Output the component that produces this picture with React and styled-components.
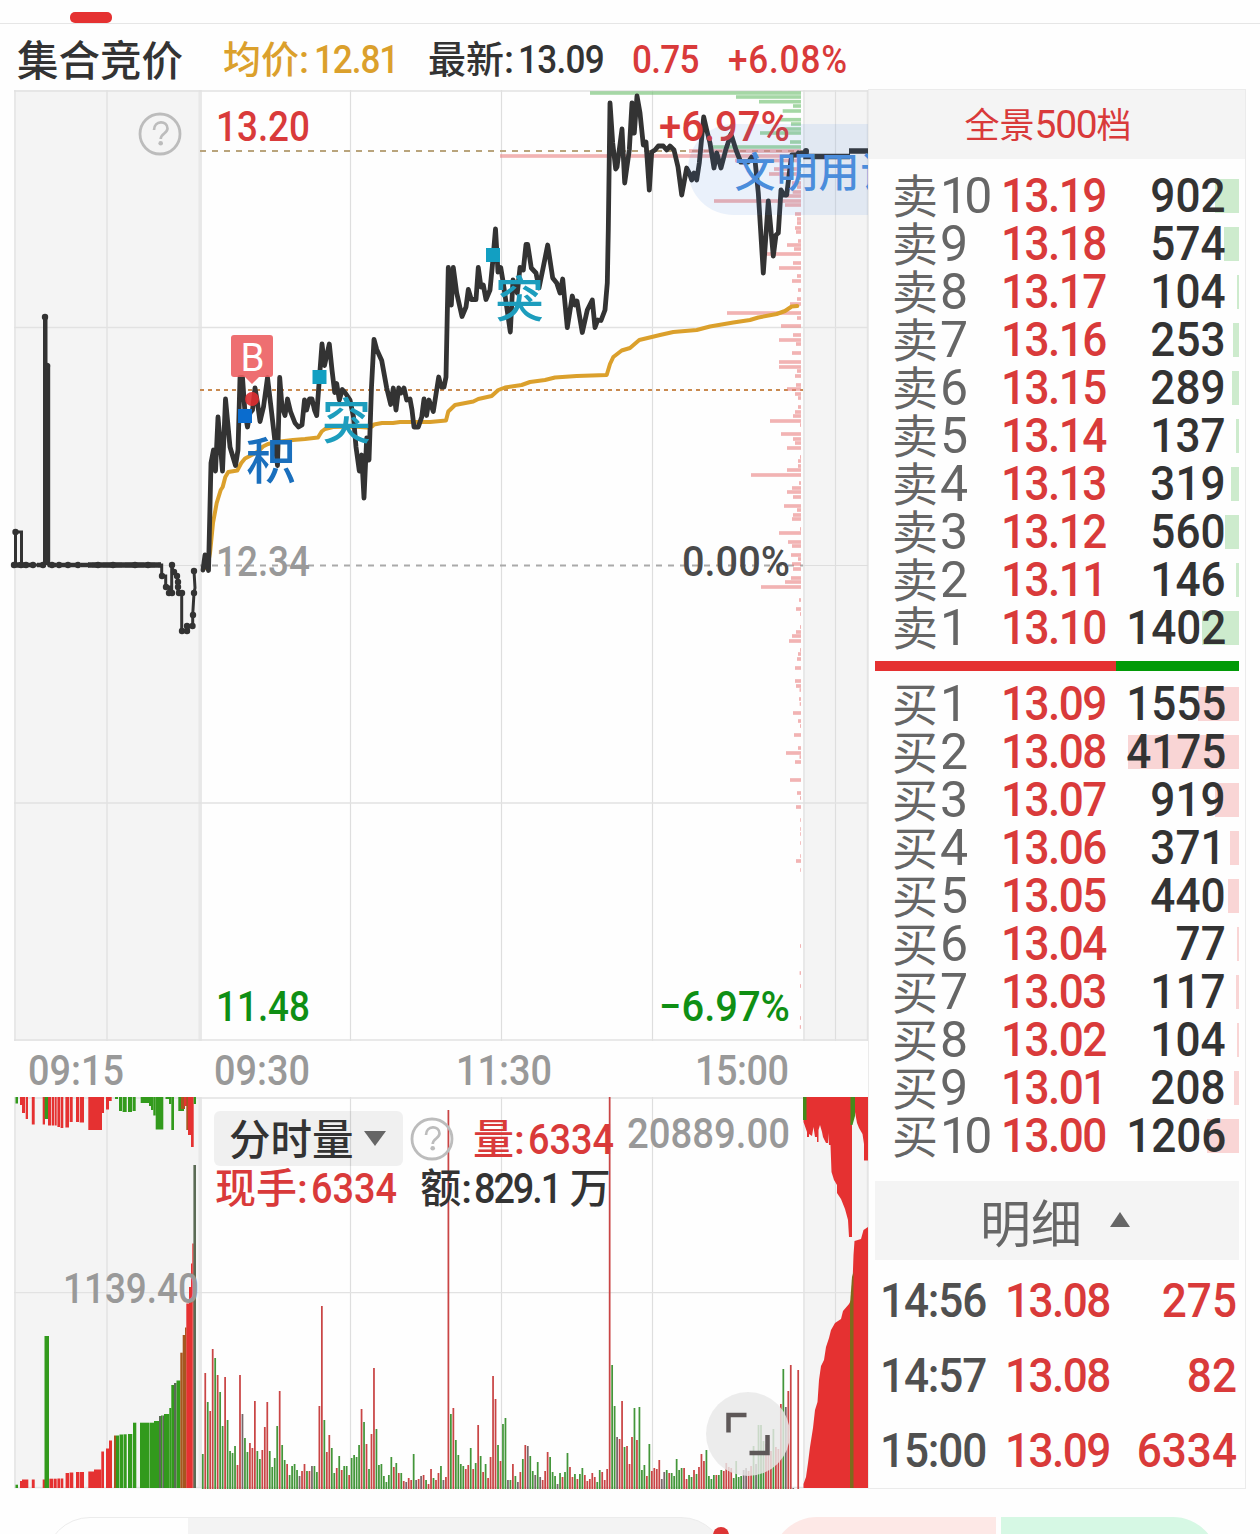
import React from "react";
import styled, { createGlobalStyle } from "styled-components";

const RED = "#d93a3a";
const GREEN = "#0f8f14";
const INK = "#333";

const GlobalStyle = createGlobalStyle`
  * { box-sizing: border-box; }
  body {
    margin: 0;
    background: #fefefe;
    font-family: Roboto, "Noto Sans CJK SC", sans-serif;
    color: #333;
  }
`;

const Page = styled.div`
  width: 1260px;
  height: 1534px;
  overflow: hidden;
  display: flex;
  flex-direction: column;
`;

const TabStrip = styled.div`
  flex: none;
  height: 24px;
  padding: 12px 0 0 70px;
  border-bottom: 1px solid #e6e6e6;
`;

const TabMark = styled.div`
  width: 42px;
  height: 11px;
  border-radius: 5px;
  background: #e53131;
`;

const Summary = styled.header`
  flex: none;
  height: 65px;
  padding: 3px 0 0 17px;
  display: grid;
  grid-template-columns: 206px 205px 204px 95px auto;
  align-items: center;
  line-height: 60px;
  white-space: nowrap;
`;

const Title = styled.div`
  font-size: 41.5px;
  font-weight: 500;
  padding-top: 5px;
`;

const Quote = styled.div`
  font-size: 38px;
  font-weight: 500;
  color: ${p => p.$color || INK};
`;

// narrow figures
const Num = styled.span`
  display: inline-block;
  transform: scaleX(0.9);
  transform-origin: ${p => p.$origin || "left"};
  margin-left: ${p => p.$left || 0}px;
  font-size: ${p => p.$size}px;
  font-weight: 500;
  letter-spacing: ${p => p.$gap || 0}px;
  color: ${p => p.$color || "inherit"};
`;

const Main = styled.div`
  flex: none;
  height: 1400px;
  display: flex;
`;

const Charts = styled.div`
  width: 868px;
  display: flex;
  flex-direction: column;
  padding-top: 1px;
`;

const Plot = styled.svg`
  display: block;
  flex: none;
`;

const TimeAxis = styled.div`
  flex: none;
  height: 56px;
  padding: 2px 0 0 27px;
  display: grid;
  grid-template-columns: 187px 242px 239px auto;
  align-items: center;
  color: #999;
`;

const VolumeBox = styled.div`
  position: relative;
  height: 392px;
`;

const VolumeLegend = styled.div`
  position: absolute;
  top: 14px;
  left: 214px;
  width: 580px;
  white-space: nowrap;
`;

const LegendRow = styled.div`
  display: flex;
  align-items: center;
  height: ${p => p.$h}px;
  line-height: ${p => p.$h}px;
`;

const Picker = styled.div`
  width: 189px;
  height: 55px;
  padding: 4px 0 0 15px;
  display: flex;
  align-items: center;
  border-radius: 6px;
  background: rgba(0, 0, 0, 0.055);
  font-size: 41.5px;
  font-weight: 500;
  svg { margin: 0 0 4px 10px; }
`;

const Legend = styled.div`
  margin-left: ${p => p.$left || 0}px;
  padding-top: 3px;
  font-size: 41px;
  font-weight: 500;
  color: ${p => p.$color || INK};
`;

const Panel = styled.aside`
  width: 378px;
  height: 1400px;
  display: flex;
  flex-direction: column;
  border: 1px solid #ebebeb;
`;

const DepthTitle = styled.div`
  height: 69px;
  margin-bottom: 13px;
  padding: 1px 18px 0 0;
  background: #f4f4f4;
  color: ${RED};
  font-size: 35px;
  line-height: 69px;
  text-align: center;
  span {
    font-size: 39px;
    letter-spacing: -1.2px;
  }
`;

const Level = styled.div`
  height: 48px;
  display: grid;
  grid-template-columns: 109px 109px 1fr;
  align-items: center;
  padding: 0 6px 0 23px;
  line-height: 48px;
`;

const LevelName = styled.div`
  height: 48px;
  font-size: 46px;
  line-height: 48px;
  color: #666;
  white-space: nowrap;
  span {
    margin-left: 2px;
    font-size: 50px;
    letter-spacing: -3.8px;
  }
`;

const LevelSize = styled.div`
  height: 34px;
  display: flex;
  justify-content: flex-end;
  align-items: center;
  padding-right: 13px;
  background: linear-gradient(${p => p.$tint}, ${p => p.$tint}) right / ${p => p.$w}px 34px no-repeat;
`;

const Ratio = styled.div`
  height: 10px;
  margin: 9px 6px;
  display: grid;
  grid-template-columns: 241px 1fr;
  background: #029a08;
  &::before { content: ""; background: #e53131; }
`;

const TradesTitle = styled.div`
  height: 79px;
  margin: 21px 6px 3px;
  padding-left: 105px;
  display: flex;
  align-items: center;
  background: #f4f4f4;
  color: #666;
  font-size: 51px;
  svg { margin: 0 0 3px 28px; }
`;

const Trade = styled.div`
  height: 75px;
  padding: 0 8px 0 11px;
  display: grid;
  grid-template-columns: 125px 110px 1fr;
  align-items: center;
  > :last-child { text-align: right; }
`;

const BottomBar = styled.div`
  flex: none;
  height: 100px;
  margin-top: 28px;
  display: flex;
  padding-left: 45px;
`;

const SearchPill = styled.div`
  position: relative;
  width: 681px;
  height: 90px;
  border: 1px solid #ececec;
  border-radius: 45px;
  background: linear-gradient(90deg, #fefefe 142px, #f3f3f3 142px);
`;

const Dot = styled.div`
  position: absolute;
  top: 9px;
  right: -4px;
  width: 16px;
  height: 16px;
  border-radius: 50%;
  background: #dd3535;
`;

const Side = styled.div`
  width: ${p => p.$w}px;
  height: 90px;
  margin-left: ${p => p.$left}px;
  background: ${p => p.$bg};
  border-radius: ${p => p.$radius};
`;

// price levels resting in the book, [y, left edge]
const asks = [[93, 590], [97, 736], [101.7, 759], [106, 793], [111, 782.7], [119.7, 780], [124, 791],
  [129, 783], [133, 760], [142, 790], [147, 713]];

const bids = [[151, 689], [156, 500], [160.5, 735], [169, 774], [174, 769], [178, 796], [183, 792], [187, 797],
  [192, 792.7], [196, 785], [201, 714], [205, 785], [214, 795], [219, 797], [223, 797], [228, 795], [232, 796],
  [241, 798], [245, 787], [249, 794], [254, 767], [263, 793], [268, 779], [276, 797], [281, 792], [290, 798],
  [299, 797], [304, 790], [313, 727], [318, 797], [326, 781], [335, 793], [340, 779], [344, 796], [353, 792],
  [362, 779], [367, 779], [371, 797], [376, 795], [385, 796], [389, 787], [394, 795], [398, 798], [407, 798],
  [412, 795], [416, 793], [421, 770], [425, 800], [434, 781], [439, 793], [443, 795], [448, 787], [457, 800],
  [461, 798], [466, 798], [470, 787], [475, 751], [483, 799], [488, 792], [492, 787], [497, 793], [506, 784],
  [510, 797], [515, 793], [519, 792], [529, 800], [533, 779], [542, 788], [546, 792], [555, 791], [559, 798],
  [564, 792], [569, 793], [578, 791], [582, 785], [587, 761], [600, 799], [609, 796], [614, 800], [627, 800],
  [632, 796], [636, 792], [641, 789], [650, 800], [654, 798], [659, 797], [668, 795], [681, 795], [686, 796],
  [690, 799.5], [699, 799], [704, 799.7], [713, 793], [721, 798], [726, 800], [735, 794], [748, 798], [753, 786],
  [757, 799.5], [762, 795], [780, 790], [793, 797], [798, 800], [807, 796], [820, 800.2], [829, 800.2],
  [834, 800.2], [843, 800.2], [856, 800.2], [861, 796], [870, 800.2], [946, 800], [973, 799.6], [986, 800],
  [1018, 800], [1027, 799.8]];

const priceLine = `203,570 205,555 208.5,570.5 211,463 213.5,450 215.5,471 218,417 222.5,471 225.5,399 230,447
235.5,465.5 238,450 240,377.5 242.5,377.5 245,413 247.5,427 250,413 252.5,410 255,388 257.5,403 260,421.5
263.5,407 267.5,377.5 270.5,403 274,433 277.5,465.5 279.7,377.5 282,407 285,415.5 287.5,399 290.5,411.5 295,423
298.5,427 302,425 304.5,400 306.5,410 309.5,399 312,399 314.5,410 316.7,415.5 319.5,377 322,344 324.5,365.5
329.3,344 332,370 334.7,392.5 336.7,383.5 339.3,400 342.3,389.5 345,392.5 350,400 353.5,417 356,447 359.3,471
361.7,455 364,498 366.7,438 369,460 371.5,387 374,339.5 376.7,349.5 381.7,360.5 386.7,388 390.7,404.5
393.3,388 396,410 398.7,388 401,393 404,388 406.7,400 410,399 412,410 414,427 418.3,427 421.7,417 424,399
426.5,415.5 429,400 433.3,411.5 438.7,377 441.3,387 444,387 446,377 447.3,313 448.3,267.5 451.3,305 453.3,267.5
456.7,293 462,316.5 466,307 468.3,289.5 471.3,299.5 476,299.5 478.3,267.5 481,287 483.3,285 486,299.5 490,290
492.7,262 495.5,229 498,272 500.7,267.5 503.3,283 506.7,307 510.3,332 513,280 517.3,293 520,267.5 523.3,270
526,244.5 527.7,244.5 531.3,268 536,273 539,288 543.3,267 547.7,245 552.7,278 556.7,283 560,293 562.7,279
567.3,327.5 572.3,296 574.7,305 577,301 582.3,332.5 587.3,310 592.3,300 595,327.5 597.7,320 601,320.5 605,310
607.3,283 608.3,230 610,103 612.7,143 615.7,169 617,167 622,129 624.7,183 629.3,150 632,103 634.3,133 637,96
640,113 643.3,145 646,142 649.3,190 651.7,152 655,150 658.3,146 663.3,146 666.7,150 670,146 674,150 678,167
681.7,195 686.7,168 689.3,173 691.7,180 694,173 696.7,180 699.3,163 703.7,117 706.7,130 710,143 714,168
716.7,153 721,168 725.7,150 731,134 736,150 740.7,162 748.3,162 751.7,157 755,160 758.3,193 763.3,273
768.3,201 773.3,256 776,235 778.3,233 781,190 784,195 786.7,195 789.3,173 791.7,155 796.7,155 798.3,153`;

const averageLine = `205,568 208,564 210,553 213,523 216.7,503 220.7,490 222.7,487 225.3,477 228.3,472 237.3,470.5
241.3,463 245,458.5 251.7,455 258,451.5 263,446.5 268,444 280,441.5 293,440 305,439 318,437.5 321.7,431.5
325,429 333,427 353,426.5 367,427.5 372,426.5 374,424.5 382,423 393,423 400,422 430,422 446,420.5 448.3,411.5
455,405 473.3,401.5 478.3,399 491.7,396 498.3,390 505,387.5 521.7,385 530,382 545,380 555,377.5 576.7,376
606.7,375 610,364 613.3,357 621.7,350.5 630,348 639.3,340 660,335 673.3,332 696.7,330 710,326.5 733.3,322.5
750,320 758.3,317.5 776.7,314 785,311 791.7,306.5 797.3,306`;

const auctionLine = `14,565 15.5,565 15.5,532 21.5,532 21.5,565 44.5,565 44.5,317 46,317 46,366 48.7,366 48.7,565
161.7,565 161.7,576 165.7,576 165.7,587 169.3,587 169.3,593 171.7,593 171.7,565 173.5,573 177.5,576 178,593
181.7,593 181.7,631 188.3,631 188.3,626 192.7,626 192.7,615 194,593 195,588 194,571`;

const auctionDots = [[14, 565], [15.5, 532], [21, 565], [26, 565], [33, 565], [43, 565], [45, 317], [47, 366],
  [52, 565], [59, 565], [68, 565], [78, 565], [98, 565], [113, 565], [135, 565], [148, 565], [162, 576],
  [166, 587], [169, 593], [172, 593], [172, 565], [174, 572], [177, 576], [178, 582], [178, 587], [179, 593],
  [182, 593], [182, 631], [187, 631], [187, 626], [192.5, 626], [193, 615], [194, 593], [194, 571]];

// one entry a minute: side and height
const minutes = `G35 R116 G87 R78 R140 G131 R114 G97 G63 R112 G69 G38 G36 G43 R24 R114 K75 G51 G37 R46 R41 R88 G38
G30 R39 R62 R87 G38 G22 G31 G63 R98 G44 G29 R25 G14 G23 G25 G19 K13 R18 R25 G18 R18 K23 G23 G17 R83 R183 G69 R37
R54 G41 G16 R21 G33 R19 G23 G23 R14 G31 G34 G32 G44 R80 G67 R45 G20 R55 R121 G60 G24 G25 G13 G7 G14 G32 R22 G26
R16 G16 R8 K7 R11 R9 G35 K9 R10 K13 R14 G9 R5 R20 G11 R9 R16 G23 K9 R12 R379 G75 R81 G49 G34 G25 G23 R20 R24 G41
R20 G26 R64 G33 R17 G25 R11 R32 R113 R90 G44 R28 G65 G71 K9 G9 R25 G13 K7 R17 G30 R44 K43 G33 G18 K14 G27 K12 R9
R18 R37 G32 G17 G13 K5 G16 R12 G17 G36 R22 R12 G15 R10 G15 G21 R14 R8 R10 R16 R12 G7 G19 R17 R9 R20 R392 G124 G83
K52 R50 R88 G42 R43 R25 R52 G81 R49 G82 G19 G24 R13 G45 R18 R21 R20 R29 K10 K17 G19 R16 G16 G13 G30 G19 G21 R21
R10 G14 G12 R19 G15 R22 R35 R28 G39 G13 G10 G14 R14 G14 G19 R18 R26 R22 R21 G11 G28 G12 G13 K19 K21 R18 R23 G43
K25 G64 G64 G48 R45 R52 R38 G60 R42 R40 R85 G120 K82 R98 R124 K1 K0 R119`.split(/\s+/);

const barColors = { R: "#c94545", G: "#43963a", K: "#77676a" };
const solidColors = { R: "#e53131", G: "#329a1c", K: "#5b6b55", M: "#a6561f" };

// auction blocks: side, left, right, edge
const auctionTop = [["G", 15.5, 18, 1103.5], ["R", 20, 22.3, 1105], ["R", 22, 25, 1113], ["R", 25.7, 28, 1119],
  ["R", 31.8, 34.7, 1124.5], ["R", 42.7, 45, 1124.5], ["G", 44.7, 49.3, 1119], ["R", 48, 51, 1125.5],
  ["R", 51.7, 54, 1125.5], ["R", 54.6, 56.7, 1125.5], ["R", 57.4, 60, 1127], ["R", 60.6, 63.3, 1128],
  ["R", 65.4, 69, 1127.5], ["R", 69.7, 72.7, 1122], ["R", 76, 79, 1122], ["R", 79.7, 84, 1122.5],
  ["R", 88.3, 102, 1130], ["R", 102, 104, 1113], ["R", 106, 109, 1109.5], ["R", 109, 111.7, 1101],
  ["G", 115, 118, 1099], ["G", 119, 122, 1111], ["G", 122.6, 126.7, 1112], ["G", 128, 132, 1112],
  ["G", 132.6, 135.7, 1111], ["G", 140.7, 149, 1103], ["G", 149, 151, 1106], ["G", 151, 153.3, 1110],
  ["G", 153.3, 155.7, 1115.5], ["G", 155.7, 163.3, 1129.5], ["G", 165.5, 169, 1099], ["G", 169, 171.3, 1104],
  ["G", 171.3, 174, 1130], ["G", 178.3, 184, 1111], ["M", 181, 185, 1109], ["R", 184, 188, 1106],
  ["M", 186.3, 188.5, 1130], ["R", 188, 191, 1135], ["R", 191, 193.7, 1147], ["G", 193.7, 196, 1104]];

const auctionBottom = [["G", 15.5, 18, 1484.7], ["R", 20, 22, 1481], ["R", 22, 28.3, 1479.5], ["R", 31.8, 34.7, 1479.5],
  ["R", 42.7, 45, 1479.5], ["G", 44.5, 49, 1336], ["R", 49.4, 53, 1478.7], ["R", 53.6, 56.7, 1478.7],
  ["R", 57.4, 60, 1478.5], ["R", 60.6, 63.3, 1478.5], ["R", 65.6, 69, 1473], ["R", 69.6, 73.3, 1472.5],
  ["R", 76, 79.5, 1472], ["R", 80, 84, 1472], ["R", 88.3, 94, 1471.5], ["R", 94, 101.3, 1469.5],
  ["R", 101.3, 104, 1451.5], ["R", 106, 109, 1448.5], ["R", 109, 112, 1440.5], ["M", 114, 116, 1435.5],
  ["G", 116, 119, 1435.5], ["G", 119.5, 123, 1434.5], ["G", 123.5, 126.7, 1434.3], ["G", 128, 132.3, 1434],
  ["G", 133, 136.3, 1422.7], ["G", 140, 149, 1422.7], ["G", 149.4, 154, 1422.7], ["G", 154, 159, 1421],
  ["K", 159, 161, 1416], ["G", 161, 162.4, 1415.5], ["K", 162.4, 164, 1415.5], ["G", 164, 169.3, 1414],
  ["G", 169.3, 171.3, 1408], ["G", 171.3, 174, 1385], ["K", 174, 176.5, 1383], ["G", 176.5, 180.3, 1380.5],
  ["M", 180.3, 182.7, 1352.7], ["M", 182.7, 185, 1335], ["M", 185, 186.5, 1327.5], ["R", 186.3, 189, 1303.5],
  ["R", 189, 191, 1287], ["R", 191, 192.3, 1263.5], ["R", 192.3, 193.7, 1243.5], ["K", 193.4, 196, 1165]];

const sells = [["10", "13.19", 902], ["9", "13.18", 574], ["8", "13.17", 104], ["7", "13.16", 253],
  ["6", "13.15", 289], ["5", "13.14", 137], ["4", "13.13", 319], ["3", "13.12", 560], ["2", "13.11", 146],
  ["1", "13.10", 1402]];

const buys = [["1", "13.09", 1555], ["2", "13.08", 4175], ["3", "13.07", 919], ["4", "13.06", 371],
  ["5", "13.05", 440], ["6", "13.04", 77], ["7", "13.03", 117], ["8", "13.02", 104], ["9", "13.01", 208],
  ["10", "13.00", 1206]];

const trades = [["14:56", "13.08", 275], ["14:57", "13.08", 82], ["15:00", "13.09", 6334]];

const Label = ({ x, y, w, fill, children }) => (
  <text x={x} y={y} fill={fill} fontSize="42" fontWeight="500" textLength={w} lengthAdjust="spacingAndGlyphs">
    {children}
  </text>
);

const Help = ({ x, y }) => (
  <g>
    <circle cx={x} cy={y} r="20" fill="none" stroke="#bcbcbc" strokeWidth="2.8" />
    <path
      d={`M${x - 6} ${y - 4}c0-10 13.500-10 13.500-1.500c0 5-6.800 5-6.800 10.500`}
      fill="none"
      stroke="#bcbcbc"
      strokeWidth="2.700"
    />
    <circle cx={x + 0.7} cy={y + 9.3} r="2.3" fill="#bcbcbc" />
  </g>
);

const Grid = ({ top, bottom, rows }) => (
  <g>
    <rect x="14" y={top} width="187" height={bottom - top} fill="#f4f4f4" />
    <rect x="803" y={top} width="65" height={bottom - top} fill="#f4f4f4" />
    <path d={`M107 ${top}V${bottom}M350.500 ${top}V${bottom}M501.500 ${top}V${bottom}M652.500 ${top}V${bottom}M835.500 ${top}V${bottom}`} stroke="#dedede" strokeWidth="1.200" />
    <path d={`M15 ${top}V${bottom}M804 ${top}V${bottom}M867.500 ${top}V${bottom}`} stroke="#e4e4e4" strokeWidth="1.500" />
    <path d={`M200.200 ${top}V${bottom}`} stroke="#e8e8e8" strokeWidth="3.500" />
    {rows.map(y => (
      <path key={y} d={`M14 ${y}H868`} stroke="#e2e2e2" strokeWidth="1.300" />
    ))}
  </g>
);

const PriceChart = () => (
  <Plot width="868" height="951" viewBox="0 90 868 951">
    <Grid top={90} bottom={1041} rows={[91, 327.5, 803, 1040]} />
    <path d="M14 565.500H201M803 565.500H868" stroke="#dedede" />
    <path d="M200 151H803" stroke="#b9a47c" strokeWidth="1.800" strokeDasharray="6 6" />
    <path d="M200 390H803" stroke="#c98a50" strokeWidth="2" strokeDasharray="4 4" />
    <path d="M200 565.500H803" stroke="#aaa" strokeWidth="1.900" strokeDasharray="6 6" />
    {asks.map(([y, x]) => (
      <rect key={y} x={x} y={y - 1.8} width={801 - x} height="3.6" fill="#74c274" fillOpacity="0.65" />
    ))}
    {bids.map(([y, x]) => (
      <rect key={y} x={x} y={y - 1.8} width={801 - x} height="3.6" fill="#ea8585" fillOpacity="0.62" />
    ))}
    <polyline points={averageLine} fill="none" stroke="#dba02c" strokeWidth="4" strokeLinejoin="round" strokeLinecap="round" />
    <polyline points={priceLine} fill="none" stroke={INK} strokeWidth="4.800" strokeLinejoin="round" strokeLinecap="round" />
    <path d="M797 153.500H806V156.500H850M849 151H868" fill="none" stroke={INK} strokeWidth="5.500" />
    <circle cx="806" cy="151" r="3" fill={INK} />
    <polyline points={auctionLine} fill="none" stroke={INK} strokeWidth="3" />
    <path d="M46.500 366V565" stroke={INK} strokeWidth="4" />
    <path d="M88 565H161M14 565H26" stroke={INK} strokeWidth="5.500" />
    <path d="M26 565H161" stroke={INK} strokeWidth="4.500" strokeDasharray="8 3" />
    {auctionDots.map(([x, y], i) => (
      <circle key={i} cx={x} cy={y} r="3.200" fill={INK} />
    ))}
    <Help x={160} y={134} />
    <Label x={216} y={141} w={94} fill={RED}>13.20</Label>
    <Label x={659} y={141} w={131} fill={RED}>+6.97%</Label>
    <Label x={216} y={576} w={94} fill="#999">12.34</Label>
    <Label x={682} y={576} w={108} fill="#4a4a4a">0.00%</Label>
    <Label x={216} y={1021} w={94} fill={GREEN}>11.48</Label>
    <Label x={659} y={1021} w={131} fill={GREEN}>−6.97%</Label>

    <path d="M234 335H270Q273 335 273 338V374Q273 377 270 377H259L252 384L245 377H234Q231 377 231 374V338Q231 335 234 335Z" fill="#ec5f62" fillOpacity="0.9" />
    <text x="240.500" y="370.500" fontSize="38" textLength="24" lengthAdjust="spacingAndGlyphs" fill="#fff">B</text>
    <circle cx="252" cy="399" r="7" fill="#de2d30" fillOpacity="0.9" />
    <rect x="238" y="409" width="14" height="14" fill="#0a6cce" />
    <rect x="312.500" y="370" width="14" height="14" fill="#129fc2" />
    <rect x="486" y="248" width="14" height="14" fill="#129fc2" />
    <text x="246" y="479" fontSize="50" fontWeight="500" fill="#1a6fbd">积</text>
    <text x="322" y="439" fontSize="49" fontWeight="500" fill="#1d9dbd">突</text>
    <text x="495" y="317" fontSize="49" fontWeight="500" fill="#1d9dbd">突</text>

    <rect x="688" y="124" width="240" height="91" rx="45.500" fill="#3c82e6" fillOpacity="0.1" />
    <text x="734.500" y="186.500" fontSize="41" fontWeight="500" letterSpacing="1" fill="#4b8ddb">文明用语</text>
  </Plot>
);

const VolumeChart = () => (
  <Plot width="868" height="392" viewBox="0 1097 868 392">
    <Grid top={1097} bottom={1488} rows={[1098, 1292.7, 1487.5]} />
    {minutes.map((m, i) => {
      const h = +m.slice(1);
      return (
        <rect key={i} x={201.9 + i * 2.481} y={1489 - h} width="1.75" height={h} fill={barColors[m[0]]} />
      );
    })}
    {auctionTop.map(([side, l, r, edge]) => (
      <rect key={l} x={l} y="1097" width={r - l} height={edge - 1097} fill={solidColors[side]} />
    ))}
    {auctionBottom.map(([side, l, r, edge]) => (
      <rect key={l} x={l} y={edge} width={r - l} height={1488 - edge} fill={solidColors[side]} />
    ))}
    <path
      d="M803.500 1488V1484L806 1477L808 1463L810 1447L813 1428L815 1410L817.500 1402L819 1380L821 1366L824 1360L826 1347L829 1338L831 1330L835 1323L841 1319L843 1311L849 1304L852 1298L853.500 1255L854.500 1241L861 1239L863.500 1230L868 1227V1488Z"
      fill="#e53131"
    />
    <path d="M850 1304L852 1277L853.500 1272V1488H850Z" fill="#7d6b1c" />
    <path
      d="M803.500 1097V1122L807 1132V1137H809V1134L812 1136L813.500 1127L815 1137H817V1142H818.500V1130L820 1125L822 1132L823 1137L826 1143H828V1133L829 1145H830.500L831.500 1172L834 1180L837 1185V1193L841 1199L845 1209L848 1220L849 1237H852V1097Z"
      fill="#e53131"
    />
    <path d="M803 1097H806.500V1120H803ZM850.500 1097H855V1116L852.500 1125H850.500Z" fill="#448b1b" />
    <path d="M855 1097V1112L857 1123L859 1128L862.500 1134L864 1144V1160.500H868V1097Z" fill="#e53131" />
    <Help x={432} y={1139} />
    <Label x={63} y={1303} w={136} fill="#999">1139.40</Label>
    <Label x={627} y={1148} w={163} fill="#999">20889.00</Label>
    <circle cx="748" cy="1434" r="42" fill="#e8e8e8" fillOpacity="0.82" />
    <path d="M746.500 1415H728.500V1432.500M767.500 1435V1453H749.500" fill="none" stroke="#5e5858" strokeWidth="4.500" />
  </Plot>
);

const Book = ({ name, levels, tint }) =>
  levels.map(([n, price, size]) => (
    <Level key={n}>
      <LevelName>{name}<span>{n}</span></LevelName>
      <Num $size={49} $color={RED} $gap={-1.7}>{price}</Num>
      <LevelSize $tint={tint} $w={Math.floor(size * 0.0267)}>
        <Num $size={49} $origin="right">{size}</Num>
      </LevelSize>
    </Level>
  ));

export default function App() {
  return (
    <Page>
      <GlobalStyle />
      <TabStrip>
        <TabMark />
      </TabStrip>
      <Summary>
        <Title>集合竞价</Title>
        <Quote $color="#dba02c">均价:<Num $size={39} $left={5} $gap={-1.2}>12.81</Num></Quote>
        <Quote>最新:<Num $size={39} $left={4} $gap={-0.8}>13.09</Num></Quote>
        <Quote $color={RED}><Num $size={39} $gap={-0.8}>0.75</Num></Quote>
        <Quote $color={RED}><Num $size={39} $left={1} $gap={0.9}>+6.08%</Num></Quote>
      </Summary>
      <Main>
        <Charts>
          <PriceChart />
          <TimeAxis>
            <Num $size={42} $left={1}>09:15</Num>
            <Num $size={42}>09:30</Num>
            <Num $size={42}>11:30</Num>
            <Num $size={42} $gap={-0.5}>15:00</Num>
          </TimeAxis>
          <VolumeBox>
            <VolumeChart />
            <VolumeLegend>
              <LegendRow $h={55}>
                <Picker>
                  分时量
                  <svg width="22" height="15"><path d="M0 0H22L11 15Z" fill="#666" /></svg>
                </Picker>
                <Legend $left={70} $color={RED}>量:<Num $size={42} $left={3}>6334</Num></Legend>
              </LegendRow>
              <LegendRow $h={42}>
                <Legend $left={1} $color={RED}>现手:<Num $size={42} $left={3}>6334</Num></Legend>
                <Legend $left={14}>额:<Num $size={42} $left={2} $gap={-2.3}>829.1</Num>万</Legend>
              </LegendRow>
            </VolumeLegend>
          </VolumeBox>
        </Charts>
        <Panel>
          <DepthTitle>全景<span>500</span>档</DepthTitle>
          <Book name="卖" levels={sells} tint="#cdebcd" />
          <Ratio />
          <Book name="买" levels={buys} tint="#f9d5d5" />
          <TradesTitle>
            明细
            <svg width="20" height="15"><path d="M0 15H20L10 0Z" fill="#666" /></svg>
          </TradesTitle>
          {trades.map(([time, price, size]) => (
            <Trade key={time}>
              <Num $size={49} $color="#505050" $gap={-1.3}>{time}</Num>
              <Num $size={49} $color={RED} $gap={-1.7}>{price}</Num>
              <Num $size={49} $color={RED} $origin="right">{size}</Num>
            </Trade>
          ))}
        </Panel>
      </Main>
      <BottomBar>
        <SearchPill>
          <Dot />
        </SearchPill>
        <Side $w={224} $left={46} $bg="#fde8e6" $radius="45px 0 0 45px" />
        <Side $w={217} $left={5} $bg="#d6f8e4" $radius="0 45px 45px 0" />
      </BottomBar>
    </Page>
  );
}
